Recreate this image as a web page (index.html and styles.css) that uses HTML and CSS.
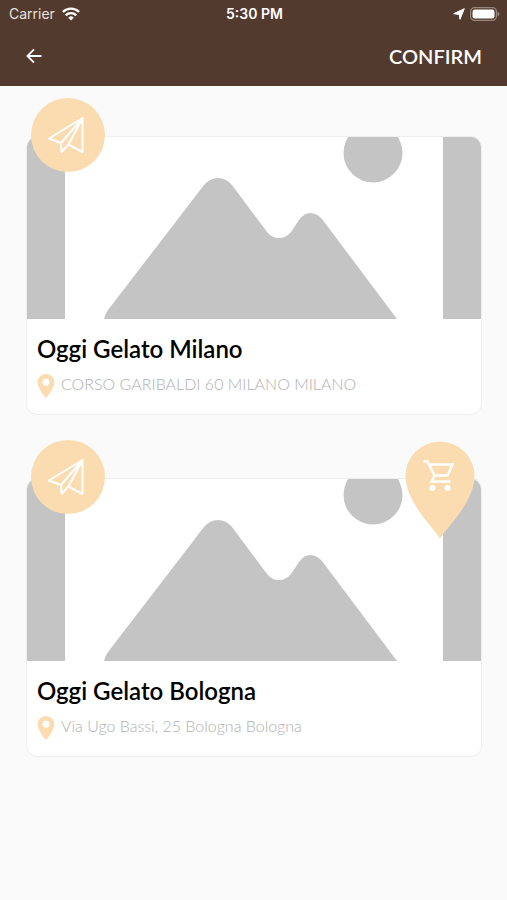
FILE: index.html
```html
<!DOCTYPE html>
<html lang="en">
<head>
<meta charset="utf-8">
<meta name="viewport" content="width=device-width, initial-scale=1">
<title>Choose a store</title>
<link rel="stylesheet" href="styles.css">
</head>
<body>
<svg class="symbols" aria-hidden="true">
  <symbol id="placeholder" viewBox="0 0 454 182" preserveAspectRatio="xMidYMid slice">
    <path fill="#c4c4c4" d="M0 0H38V182H0ZM416 0H454V182H416Z"/>
    <circle cx="346" cy="16" r="29.5" fill="#c4c4c4"/>
    <path fill="#c4c4c4" d="M77 182Q78 177 81 173L177 48Q183 41 191 41Q199 41 205 48L240 95Q245 101 252 101Q259 101 264 95L272 83Q277 76 283 76Q290 76 295 82L370 182Z"/>
  </symbol>
  <symbol id="plane" viewBox="0 0 38 38">
    <path fill="none" stroke="#fff" stroke-width="2" stroke-linejoin="round" d="M35.500 2L2 22.500L14 27L14.500 36L21.500 28.500L35.500 36ZL14 27M35.500 2L21.500 28.500"/>
  </symbol>
  <symbol id="place" viewBox="5 2 14 20">
    <path fill="#fbdcb0" fill-rule="evenodd" d="M12 2C8.130 2 5 5.130 5 9c0 5.250 7 13 7 13s7-7.750 7-13c0-3.870-3.130-7-7-7Zm0 9.700a2.900 2.900 0 1 1 0-5.800 2.900 2.900 0 0 1 0 5.800Z"/>
  </symbol>
</svg>
<header class="top">
  <div class="status">
    <div class="status-left">
      <span>Carrier</span>
      <svg class="wifi" viewBox="0 0 18 14" aria-hidden="true">
        <path fill="#fff" d="M9 13.500L6.200 10.700A4 4 0 0 1 11.800 10.700Z"/>
        <path fill="none" stroke="#fff" stroke-width="2.400" d="M3.700 8.300A7.600 7.600 0 0 1 14.300 8.300M.9 5A11.500 11.500 0 0 1 17.100 5"/>
      </svg>
    </div>
    <span class="time">5:30 PM</span>
    <div class="status-right">
      <svg class="arrow" viewBox="0 0 12 12" aria-hidden="true"><path fill="#fff" stroke="#fff" stroke-linejoin="round" d="M11.300.7L7 11.300L6.200 6.500L.7 5.700Z"/></svg>
      <svg class="battery" viewBox="0 0 30 14" aria-hidden="true">
        <rect x=".6" y=".6" width="25.800" height="12.800" rx="4" fill="none" stroke="#958780" stroke-width="1.200"/>
        <rect x="2.500" y="2.500" width="22" height="9" rx="2.200" fill="#fff"/>
        <path fill="#958780" d="M27.500 4.500Q29.500 5.500 29.500 7T27.500 9.500Z"/>
      </svg>
    </div>
  </div>
  <nav class="bar">
    <button class="back" type="button" aria-label="Back">
      <svg viewBox="0 0 16 16" aria-hidden="true"><path fill="none" stroke="#fff" stroke-width="1.800" d="M15.500 8H1.500M8 1.300L1.400 8L8 14.700"/></svg>
    </button>
    <button class="confirm" type="button">CONFIRM</button>
  </nav>
</header>
<main class="stores">
  <article class="card">
    <svg class="photo" viewBox="0 0 454 182" aria-hidden="true"><use href="#placeholder"/></svg>
    <button class="navigate" type="button" aria-label="Directions"><svg aria-hidden="true"><use href="#plane"/></svg></button>
    <div class="details">
      <h2>Oggi Gelato Milano</h2>
      <p><svg aria-hidden="true"><use href="#place"/></svg><span>CORSO GARIBALDI 60 MILANO MILANO</span></p>
    </div>
  </article>
  <article class="card">
    <svg class="photo" viewBox="0 0 454 182" aria-hidden="true"><use href="#placeholder"/></svg>
    <button class="navigate" type="button" aria-label="Directions"><svg aria-hidden="true"><use href="#plane"/></svg></button>
    <svg class="selected" viewBox="0 0 70 98" role="img" aria-label="Selected store">
      <path fill="#fbdcb0" d="M35 97.500C26 84 .5 60 .5 35A34.500 34.500 0 0 1 69.500 35C69.500 60 44 84 35 97.500Z"/>
      <path fill="none" stroke="#fff" stroke-width="2.400" d="M18.500 20.500H22.500L29.500 34.500H42.500L47.500 23.500H24M29.500 34.500L26.500 40.500H45.500"/>
      <circle cx="27.500" cy="47" r="3" fill="#fff"/><circle cx="42.500" cy="47" r="3" fill="#fff"/>
    </svg>
    <div class="details">
      <h2>Oggi Gelato Bologna</h2>
      <p><svg aria-hidden="true"><use href="#place"/></svg><span>Via Ugo Bassi, 25 Bologna Bologna</span></p>
    </div>
  </article>
</main>
</body>
</html>
```
FILE: styles.css
```css
* { box-sizing: border-box; }

body {
  margin: 0;
  background: #fafafa;
  color: #000;
  font-family: Lato, "Liberation Sans", sans-serif;
}

svg { display: block; }
button { padding: 0; border: 0; background: none; color: inherit; font: inherit; }
.symbols { position: absolute; width: 0; height: 0; }

.top {
  height: 86px;
  background: #533a2e;
  color: #fff;
}

.status {
  display: grid;
  grid-template-columns: 1fr auto 1fr;
  align-items: center;
  height: 28px;
  padding: 0 7px 0 9px;
  font: 14px/16px Inter, sans-serif;
}
.status-left, .status-right { display: flex; align-items: center; }
.status-left { gap: 7px; color: #e9e1dc; }
.status-right { justify-content: flex-end; gap: 5px; }
.time { font-weight: 600; }
.wifi { width: 18px; height: 14px; }
.arrow { width: 12px; height: 12px; }
.battery { width: 30px; height: 14px; }

.bar {
  display: flex;
  align-items: center;
  justify-content: space-between;
  height: 55px;
  padding: 0 25px 0 26px;
}
.back svg { width: 16px; height: 16px; }
.confirm { font-size: 20px; font-weight: 600; line-height: 24px; }

.stores {
  display: flex;
  flex-direction: column;
  gap: 63px;
  padding: 50px 25px 50px 26px;
}

.card {
  position: relative;
  border: 1px solid #eee;
  border-radius: 11px;
  background: #fff;
}
.photo { width: 100%; border-radius: 10px 10px 0 0; }

.navigate {
  position: absolute;
  top: -39px;
  left: 4px;
  display: grid;
  place-items: center;
  width: 74px;
  height: 74px;
  border-radius: 50%;
  background: #fbdcb0;
}
.navigate svg { width: 38px; height: 38px; margin-right: 4px; }

.selected {
  position: absolute;
  top: -38px;
  right: 6px;
  width: 70px;
  height: 98px;
}

.details { padding: 16px 10px; }
.details h2 { margin: 0; font-size: 24px; font-weight: 600; line-height: 28px; }
.details p {
  display: flex;
  align-items: flex-start;
  gap: 6px;
  margin: 11px 0 0;
  color: #b0b0b0;
  font-size: 16px;
  font-weight: 300;
  line-height: 20px;
}
.details p svg { width: 18px; height: 24px; }
```
